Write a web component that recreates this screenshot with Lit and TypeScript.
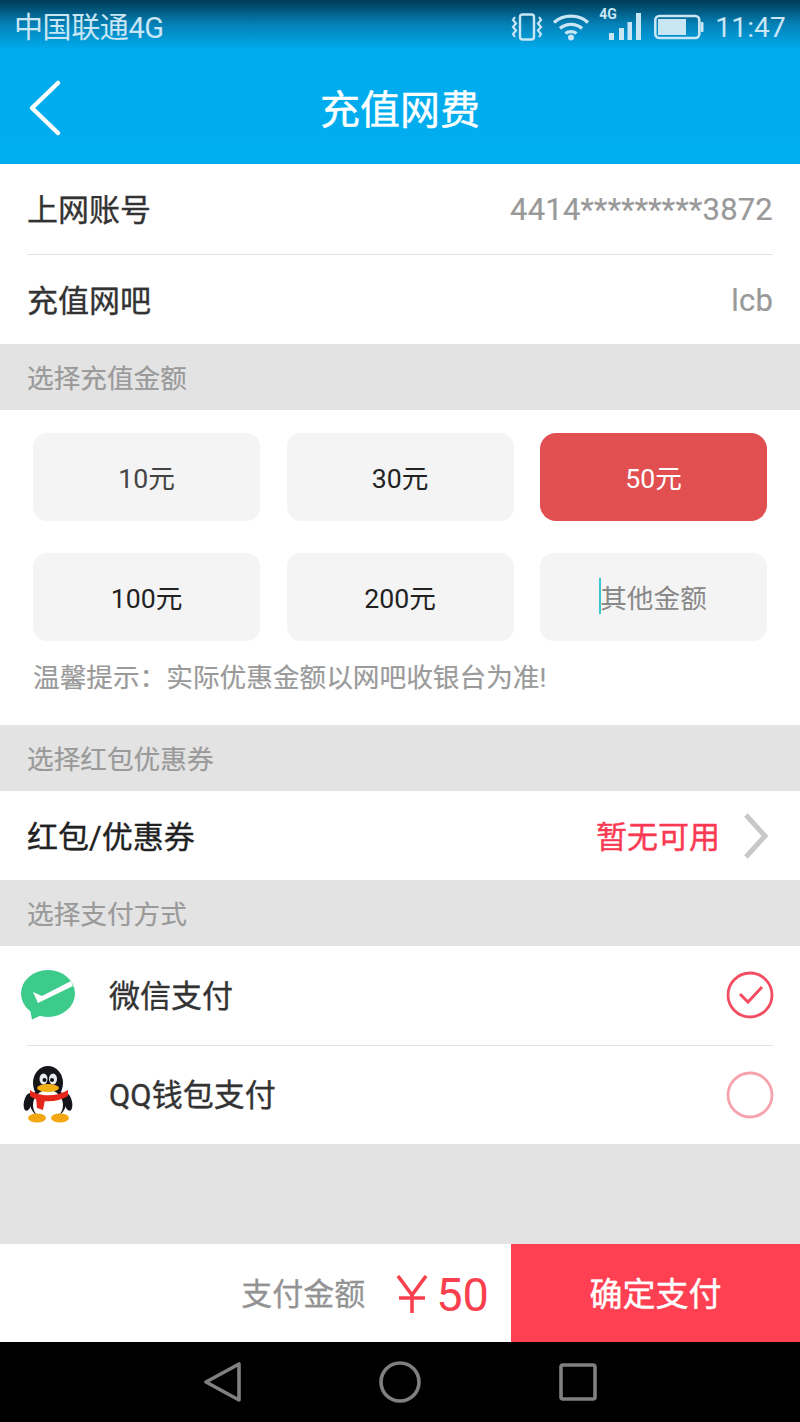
import { LitElement, html, css } from "lit";
import { customElement } from "lit/decorators.js";

@customElement("app-root")
export class AppRoot extends LitElement {
  static styles = css`
    :host { display: block; width: 800px; height: 1422px; overflow: hidden; background: #e3e3e3;
      font-family: Roboto, "Noto Sans CJK SC", sans-serif; color: #333; }
    * { box-sizing: border-box; }
    .page { display: flex; flex-direction: column; height: 1422px; }
    .top { height: 164px; background: linear-gradient(#003a56 0, #0480b5 24px, #00acee 50px, #00adef 100%); display: flex; flex-direction: column; }
    .status { height: 54px; display: flex; align-items: center; padding: 0 14px; color: #c9e6f5; }
    .carrier { font-size: 29px; line-height: 54px; flex: 1; letter-spacing: -0.4px; padding-top: 2px; }
    .status svg { display: block; flex: none; }
    .vib { margin-right: 8px; }
    .wifi { margin-right: 9px; }
    .signal { position: relative; width: 42px; height: 32px; margin: 0 12px 6px 0; }
    .signal svg { position: absolute; left: 0; top: 0; }
    .signal span { position: absolute; left: 0; top: -2px; font-size: 14px; font-weight: 700; line-height: 16px; }
    .time { font-size: 28px; margin-left: 11px; letter-spacing: 0.2px; }
    .bar { flex: 1; display: grid; grid-template-columns: 100px 1fr 100px; align-items: center; }
    .back { display: block; margin-left: 26px; margin-top: -5px; }
    .title { text-align: center; color: #fff; font-size: 40px; -webkit-text-stroke: 0.4px #fff; line-height: 110px; padding-top: 2px; }
    .rows { background: #fff; padding: 0 27px; }
    .row { display: flex; align-items: center; justify-content: space-between; font-size: 31px; color: #333; -webkit-text-stroke: 0.35px #333; }
    .h91 { height: 91px; padding-bottom: 3px; }
    .h89 { height: 89px; padding-bottom: 2px; }
    .h89b { height: 89px; padding-bottom: 3px; }
    .line { border-bottom: 1.5px solid #e3e3e3; }
    .val { color: #999; font-size: 31px; letter-spacing: 0.2px; margin-top: 4px; -webkit-text-stroke: 0.2px #999; }
    .sect { height: 66px; background: #e3e3e3; padding: 2px 0 0 27px; font-size: 26.67px; line-height: 66px; color: #9a9a9a; -webkit-text-stroke: 0.2px #9a9a9a; }
    .amount { background: #fff; height: 315px; padding: 23px 33px 0; }
    .grid { display: grid; grid-template-columns: repeat(3, 227px); column-gap: 26.5px; row-gap: 32px; }
    .opt { height: 88px; padding-bottom: 2px; border-radius: 14px; background: #f4f4f4; display: flex; align-items: center; justify-content: center; font-size: 26.67px; color: #222; }
    .opt.grey { color: #444; }
    .opt.on { background: #e24f51; color: #fff; border-radius: 16px; }
    .opt.ph { color: #888; }
    .phtext { position: relative; }
    .caret { position: absolute; left: -1px; top: 1px; width: 2px; height: 36px; background: #3cc4cc; }
    .hint { margin-top: 19px; font-size: 26.67px; line-height: 36px; color: #9a9a9a; white-space: nowrap; -webkit-text-stroke: 0.2px #9a9a9a; }
    .dark { color: #222; -webkit-text-stroke: 0.35px #222; }
    .red { color: #fa3a52; font-size: 31px; margin-right: 24px; -webkit-text-stroke: 0.4px #fa3a52; }
    .right { display: flex; align-items: center; }
    .chev { margin: 4px 5px 0 0; display: block; }
    .pay { background: #fff; }
    .payrow { margin: 0 27px; display: flex; align-items: center; font-size: 31px; -webkit-text-stroke: 0.35px #333; position: relative; color: #333; }
    .p1 { height: 100px; padding-bottom: 4px; }
    .p2 { height: 98px; padding-bottom: 2px; }
    .ico { position: absolute; display: block; }
    .wx { left: -7px; top: 23px; }
    .qq { left: -4px; top: 20px; }
    .name { margin-left: 82px; flex: 1; }
    .p2 .name { padding-bottom: 4px; }
    .radio { margin: 2px -1px 0 0; display: block; }
    .spacer { flex: 1; background: #e3e3e3; }
    .foot { height: 98px; display: flex; background: #fff; }
    .sum { flex: 1; display: flex; align-items: center; justify-content: flex-end; padding-right: 22px; }
    .sumlabel { font-size: 31px; color: #939393; margin-right: 31px; padding-bottom: 4px; -webkit-text-stroke: 0.3px #939393; }
    .yen { color: #f9404f; font-size: 47px; display: flex; align-items: center; padding-top: 2px; }
    .yen svg { margin-right: 8px; display: block; }
    .ok { width: 289px; background: #ff3f52; color: #fff; font-size: 33px; padding-bottom: 2px; -webkit-text-stroke: 0.4px #fff; display: flex; align-items: center; justify-content: center; }
    .nav { height: 80px; background: #000; display: flex; align-items: center; padding-left: 203px; }
    .nav svg { display: block; flex: none; }
    .home { margin-left: 136px; }
    .recent { margin-left: 138px; }
  `;

  render() {
    return html`<div class="page">
      <div class="top">
        <div class="status">
          <span class="carrier">中国联通4G</span>
          <svg class="vib" width="34" height="28" viewBox="0 0 34 28" fill="none" stroke="#c9e6f5">
            <rect x="10" y="1.500" width="14" height="25" rx="2.500" stroke-width="2.400"/>
            <path d="M5 4 L3 7 L6 10.500 L3 14 L6 17.500 L3 21 L5 24 M29 4 L31 7 L28 10.500 L31 14 L28 17.500 L31 21 L29 24" stroke-width="2.200"/>
          </svg>
          <svg class="wifi" width="38" height="28" viewBox="0 0 38 28" fill="none" stroke="#c9e6f5" stroke-width="3.400">
            <path d="M2 9.500 C11 1 27 1 36 9.500"/><path d="M8 15.500 C14 10 24 10 30 15.500"/><path d="M13.500 20.500 C16.500 18 21.500 18 24.500 20.500"/>
            <circle cx="19" cy="24.500" r="3" fill="#c9e6f5" stroke="none"/>
          </svg>
          <div class="signal">
            <svg width="42" height="32" viewBox="0 0 42 32" fill="#c9e6f5">
              <rect x="10" y="25" width="5" height="7"/><rect x="20" y="20" width="5" height="12"/><rect x="28.500" y="14" width="4.500" height="18"/><rect x="37" y="5" width="5" height="27"/>
            </svg>
            <span>4G</span>
          </div>
          <svg width="51" height="26" viewBox="0 0 51 26" fill="none">
            <rect x="2.300" y="2" width="44" height="22" rx="4" stroke="#c9e6f5" stroke-width="2.600"/>
            <rect x="5" y="5" width="28" height="16" fill="#c9e6f5"/>
            <rect x="47.500" y="8" width="3" height="10" rx="1" fill="#c9e6f5"/>
          </svg>
          <span class="time">11:47</span>
        </div>
        <div class="bar">
          <svg class="back" width="36" height="60" viewBox="0 0 36 60" fill="none" stroke="#fff" stroke-width="4.500" stroke-linecap="round" stroke-linejoin="round"><path d="M32 5 L6 30 L32 55"/></svg>
          <div class="title">充值网费</div>
          <span></span>
        </div>
      </div>

      <div class="rows">
        <div class="row h91 line"><span>上网账号</span><span class="val">4414*********3872</span></div>
        <div class="row h89"><span>充值网吧</span><span class="val">lcb</span></div>
      </div>
      <div class="sect">选择充值金额</div>
      <div class="amount">
        <div class="grid">
          <div class="opt grey">10元</div>
          <div class="opt">30元</div>
          <div class="opt on">50元</div>
          <div class="opt">100元</div>
          <div class="opt">200元</div>
          <div class="opt ph"><span class="phtext"><i class="caret"></i>其他金额</span></div>
        </div>
        <div class="hint">温馨提示：实际优惠金额以网吧收银台为准!</div>
      </div>
      <div class="sect">选择红包优惠券</div>
      <div class="rows">
        <div class="row h89b"><span class="dark">红包/优惠券</span>
          <span class="right"><span class="red">暂无可用</span>
            <svg class="chev" width="24" height="46" viewBox="0 0 24 46" fill="none" stroke="#c8c8c8" stroke-width="5"><path d="M2 2 L21 23 L2 44"/></svg>
          </span>
        </div>
      </div>
      <div class="sect">选择支付方式</div>
      <div class="pay">
        <div class="payrow line p1">
          <svg class="ico wx" width="58" height="54" viewBox="0 0 58 54">
            <ellipse cx="28" cy="24.500" rx="27" ry="23.500" fill="#3ccb8a"/>
            <path d="M10 40 L12 50.500 L24 45 Z" fill="#3ccb8a"/>
            <path d="M13 23 L22 27 L51 12 L53 17 L18 34 Z" fill="#fff"/>
          </svg>
          <span class="name">微信支付</span>
          <svg class="radio" width="48" height="48" viewBox="0 0 48 48" fill="none" stroke="#f24d62">
            <circle cx="24" cy="24" r="22" stroke-width="2.800"/>
            <path d="M14 23 L22 31 L36 16" stroke-width="3"/>
          </svg>
        </div>
        <div class="payrow p2">
          <svg class="ico qq" width="50" height="58" viewBox="0 0 50 58">
            <ellipse cx="5" cy="36" rx="4" ry="9" fill="#15151a" transform="rotate(12 5 36)"/>
            <ellipse cx="45" cy="36" rx="4" ry="9" fill="#15151a" transform="rotate(-12 45 36)"/>
            <ellipse cx="25" cy="37" rx="18" ry="16" fill="#15151a"/>
            <ellipse cx="25" cy="17" rx="15" ry="17" fill="#15151a"/>
            <ellipse cx="25" cy="39" rx="15" ry="15" fill="#fff"/>
            <ellipse cx="14" cy="52" rx="9" ry="4.500" fill="#f3a712"/>
            <ellipse cx="37" cy="52" rx="9" ry="4.500" fill="#f3a712"/>
            <ellipse cx="20.500" cy="13" rx="4" ry="5.500" fill="#e8ecf2"/>
            <ellipse cx="30" cy="13" rx="4" ry="5.500" fill="#e8ecf2"/>
            <circle cx="21.500" cy="14" r="2" fill="#111"/><circle cx="29" cy="14" r="2" fill="#111"/>
            <ellipse cx="25" cy="22" rx="11" ry="4" fill="#f4b010"/>
            <path d="M7 24 C16 31 34 31 45 24 L45 30 C34 37 16 37 7 30 Z" fill="#e5261b"/>
            <path d="M13 32 L22 34 L20 44 L14 42 Z" fill="#e5261b"/>
          </svg>
          <span class="name">QQ钱包支付</span>
          <svg class="radio" width="48" height="48" viewBox="0 0 48 48" fill="none" stroke="#f6a3ad">
            <circle cx="24" cy="24" r="22" stroke-width="2.800"/>
          </svg>
        </div>
      </div>
      <div class="spacer"></div>
      <div class="foot">
        <div class="sum">
          <span class="sumlabel">支付金额</span>
          <span class="yen">
            <svg width="32" height="38" viewBox="0 0 32 38" fill="none" stroke="#f9404f" stroke-width="3.600"><path d="M2 1 L16 20 L30 1 M16 20 V38 M3 23 H29"/></svg>
            50
          </span>
        </div>
        <div class="ok">确定支付</div>
      </div>
      <div class="nav">
        <svg width="40" height="42" viewBox="0 0 40 42" fill="none" stroke="#808080" stroke-width="3.600" stroke-linejoin="round"><path d="M36 3 V39 L3 21 Z"/></svg>
        <svg class="home" width="42" height="42" viewBox="0 0 42 42" fill="none" stroke="#808080" stroke-width="3.600"><circle cx="21" cy="21" r="19"/></svg>
        <svg class="recent" width="38" height="38" viewBox="0 0 38 38" fill="none" stroke="#808080" stroke-width="3.600" stroke-linejoin="round"><rect x="2" y="2" width="34" height="34" rx="2"/></svg>
      </div>
    </div>`;
  }
}
